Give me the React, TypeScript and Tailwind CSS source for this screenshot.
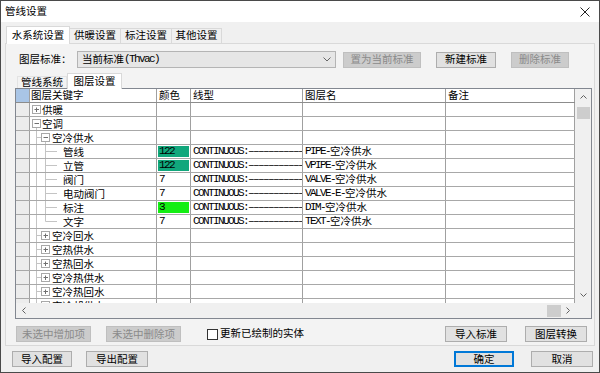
import React from 'react';

const CJK = "font-['Liberation_Sans','Noto_Sans_CJK_SC',sans-serif]";
const MONO = "font-['Liberation_Mono','Noto_Sans_CJK_SC',monospace] text-[11px] tracking-[-1.6px]";

type Row = {
  key: string;
  kind: 'root' | 'group' | 'leaf';
  open?: boolean;
  last?: boolean;
  color?: string;
  fill?: string;
  name?: string;
};

const ROWS: Row[] = [
  { key: '供暖', kind: 'root', open: false },
  { key: '空调', kind: 'root', open: true },
  { key: '空冷供水', kind: 'group', open: true },
  { key: '管线', kind: 'leaf', color: '122', fill: 'bg-[#11a77c]', name: 'PIPE' },
  { key: '立管', kind: 'leaf', color: '122', fill: 'bg-[#11a77c]', name: 'VPIPE' },
  { key: '阀门', kind: 'leaf', color: '7', name: 'VALVE' },
  { key: '电动阀门', kind: 'leaf', color: '7', name: 'VALVE-E' },
  { key: '标注', kind: 'leaf', color: '3', fill: 'bg-[#14ee14]', name: 'DIM' },
  { key: '文字', kind: 'leaf', color: '7', name: 'TEXT', last: true },
  { key: '空冷回水', kind: 'group' },
  { key: '空热供水', kind: 'group' },
  { key: '空热回水', kind: 'group' },
  { key: '空冷热供水', kind: 'group' },
  { key: '空冷热回水', kind: 'group' },
  { key: '空冷却供水', kind: 'group' },
];

const LINE = '#c4c4c4';

function Box({ x, open }: { x: number; open?: boolean }) {
  return (
    <g>
      <rect x={x + 0.5} y={2.5} width={8} height={8} fill="#fff" stroke="#a8a8a8" />
      <line x1={x + 2.5} y1={6.5} x2={x + 7} y2={6.5} stroke="#707070" />
      {!open && <line x1={x + 4.5} y1={4.5} x2={x + 4.5} y2={9} stroke="#707070" />}
    </g>
  );
}

function TreeGlyph({ row }: { row: Row }) {
  if (row.kind === 'root') {
    return (
      <svg width={12} height={13} className="shrink-0">
        {row.open && <line x1={6.5} y1={11} x2={6.5} y2={13} stroke={LINE} />}
        <Box x={2} open={row.open} />
      </svg>
    );
  }
  if (row.kind === 'group') {
    return (
      <svg width={22} height={13} className="shrink-0">
        <line x1={6.5} y1={0} x2={6.5} y2={13} stroke={LINE} />
        <line x1={6.5} y1={6.5} x2={11} y2={6.5} stroke={LINE} />
        {row.open && <line x1={15.5} y1={11} x2={15.5} y2={13} stroke={LINE} />}
        <Box x={11} open={row.open} />
      </svg>
    );
  }
  return (
    <svg width={33} height={13} className="shrink-0">
      <line x1={6.5} y1={0} x2={6.5} y2={13} stroke={LINE} />
      <line x1={15.5} y1={0} x2={15.5} y2={row.last ? 6.5 : 13} stroke={LINE} />
      <line x1={15.5} y1={6.5} x2={27} y2={6.5} stroke={LINE} />
    </svg>
  );
}

function Btn({ label, w, disabled, primary }: { label: string; w: string; disabled?: boolean; primary?: boolean }) {
  return (
    <div
      className={`${w} h-[16px] flex items-center justify-center text-[10.5px] leading-none ${
        disabled
          ? 'bg-[#cccccc] border border-[#bfbfbf] text-[#8a8a8a]'
          : primary
          ? 'bg-[#e1e1e1] border-2 border-[#0078d7] text-black'
          : 'bg-[#e1e1e1] border border-[#adadad] text-black'
      }`}
    >
      {label}
    </div>
  );
}

const CELL = 'h-full border-r border-[#a0a0a0] overflow-hidden whitespace-nowrap flex items-center';

export default function App() {
  return (
    <div className={`w-[600px] h-[373px] bg-[#f0f0f0] border border-[#4a4a4a] flex flex-col text-black ${CJK}`}>
      {/* 标题栏 */}
      <div className="h-[21px] bg-white flex items-center justify-between pl-[4px] pr-[9px] shrink-0">
        <span className="text-[10.5px]">管线设置</span>
        <svg width={10} height={10} viewBox="0 0 10 10">
          <path d="M0.5 0.5 L9.5 9.5 M9.5 0.5 L0.5 9.5" stroke="#222" strokeWidth={1} />
        </svg>
      </div>

      {/* 主选项卡 */}
      <div className="h-[21px] pl-[5px] pt-[4px] flex items-end shrink-0">
        <div className="w-[64px] h-[18px] bg-white border border-b-0 border-[#d9d9d9] flex items-center justify-center text-[10.5px] relative top-[1px]">
          水系统设置
        </div>
        <div className="w-[51px] h-[15px] bg-[#f0f0f0] border border-l-0 border-b-0 border-[#d9d9d9] flex items-center justify-center text-[10.5px]">
          供暖设置
        </div>
        <div className="w-[51px] h-[15px] bg-[#f0f0f0] border border-l-0 border-b-0 border-[#d9d9d9] flex items-center justify-center text-[10.5px]">
          标注设置
        </div>
        <div className="w-[50px] h-[15px] bg-[#f0f0f0] border border-l-0 border-b-0 border-[#d9d9d9] flex items-center justify-center text-[10.5px]">
          其他设置
        </div>
      </div>

      {/* 选项卡内容 */}
      <div className="mx-[4px] h-[303px] border border-[#d9d9d9] bg-[#f3f3f3] pl-[9px] pr-[3px] pt-[7px] flex flex-col shrink-0">
        {/* 图层标准 */}
        <div className="h-[17px] flex items-center">
          <span className="ml-[4px] w-[58px] text-[10.5px]">图层标准：</span>
          <div className="w-[259px] h-[17px] bg-[#e6e6e6] border border-[#b4b4b4] flex items-center justify-between pl-[4px] pr-[4px]">
            <span className="text-[10.5px] flex items-center">
              当前标准<span className={MONO}>(Thvac)</span>
            </span>
            <svg width={8} height={5} viewBox="0 0 8 5">
              <path d="M0.5 0.5 L4 4 L7.5 0.5" fill="none" stroke="#666" />
            </svg>
          </div>
          <div className="ml-[7px]">
            <Btn label="置为当前标准" w="w-[78px]" disabled />
          </div>
          <div className="ml-[15px]">
            <Btn label="新建标准" w="w-[60px]" />
          </div>
          <div className="ml-[15px]">
            <Btn label="删除标准" w="w-[58px]" disabled />
          </div>
        </div>

        {/* 子选项卡 */}
        <div className="mt-[5px] h-[15px] flex items-end pl-[2px]">
          <div className="w-[50px] h-[12px] flex items-center justify-center text-[10.5px] border border-b-0 border-[#e3e3e3]">
            管线系统
          </div>
          <div className="w-[55px] h-[16px] bg-white border border-b-0 border-[#d9d9d9] flex items-center justify-center text-[10.5px] relative top-[1px]">
            图层设置
          </div>
        </div>

        {/* 表格 */}
        <div className="w-[577px] h-[231px] border border-[#828790] bg-white flex flex-col text-[10.5px] leading-[13px]">
          <div className="flex h-[214px]">
            <div className="w-[559px] flex flex-col">
              {/* 表头 */}
              <div className="h-[14px] flex border-b border-[#8c8c8c] shrink-0">
                <div className="w-[14px] h-full bg-[#a9c5e6] border-r border-[#a0a0a0]" />
                <div className={`${CELL} w-[127px] pl-[1px]`}>图层关键字</div>
                <div className={`${CELL} w-[34px] pl-[2px]`}>颜色</div>
                <div className={`${CELL} w-[112px] pl-[2px]`}>线型</div>
                <div className={`${CELL} w-[143px] pl-[2px]`}>图层名</div>
                <div className={`${CELL} w-[129px] pl-[2px]`}>备注</div>
              </div>
              {/* 数据行 */}
              <div className="h-[200px] overflow-hidden">
                {ROWS.map((r, i) => (
                  <div key={i} className="h-[14px] flex border-b border-[#a8a8a8]">
                    <div className="w-[14px] h-full bg-[#ececec] border-r border-[#a0a0a0]" />
                    <div className={`${CELL} w-[127px]`}>
                      <TreeGlyph row={r} />
                      <span className="pt-[1px]">{r.key}</span>
                    </div>
                    <div className={`${CELL} w-[34px] px-[1px] py-[1px]`}>
                      {r.color && (
                        <div className={`w-full h-full flex items-center pl-[1px] ${r.fill ?? ''}`}>
                          <span className={MONO}>{r.color}</span>
                        </div>
                      )}
                    </div>
                    <div className={`${CELL} w-[112px] pl-[2px]`}>
                      {r.name && <span className={MONO}>CONTINUOUS:–––––––––––</span>}
                    </div>
                    <div className={`${CELL} w-[143px] pl-[2px]`}>
                      {r.name && (
                        <span className="flex items-center">
                          <span className={MONO}>{r.name}-</span>
                          <span>空冷供水</span>
                        </span>
                      )}
                    </div>
                    <div className={`${CELL} w-[129px]`} />
                  </div>
                ))}
              </div>
            </div>
            {/* 竖向滚动条 */}
            <div className="w-[16px] h-full bg-[#f0f0f0] flex flex-col items-center">
              <div className="h-[16px] flex items-center justify-center">
                <svg width={7} height={4} viewBox="0 0 7 4">
                  <path d="M0.5 3.5 L3.5 0.5 L6.5 3.5" fill="none" stroke="#606060" />
                </svg>
              </div>
              <div className="w-[13px] h-[12px] bg-[#cdcdcd] mt-[2px]" />
              <div className="flex-1" />
              <div className="h-[16px] flex items-center justify-center">
                <svg width={7} height={4} viewBox="0 0 7 4">
                  <path d="M0.5 0.5 L3.5 3.5 L6.5 0.5" fill="none" stroke="#606060" />
                </svg>
              </div>
            </div>
          </div>
          {/* 横向滚动条 */}
          <div className="flex h-[15px]">
            <div className="w-[559px] h-full bg-[#f0f0f0] flex items-center">
              <div className="w-[16px] flex items-center justify-center">
                <svg width={4} height={7} viewBox="0 0 4 7">
                  <path d="M3.5 0.5 L0.5 3.5 L3.5 6.5" fill="none" stroke="#606060" />
                </svg>
              </div>
              <div className="flex-1" />
              <div className="w-[14px] h-[12px] bg-[#cdcdcd]" />
              <div className="w-[14px] flex items-center justify-center">
                <svg width={4} height={7} viewBox="0 0 4 7">
                  <path d="M0.5 0.5 L3.5 3.5 L0.5 6.5" fill="none" stroke="#606060" />
                </svg>
              </div>
            </div>
            <div className="w-[16px] h-full bg-[#f0f0f0]" />
          </div>
        </div>

        {/* 面板底部按钮 */}
        <div className="mt-[7px] h-[16px] flex items-center pl-[1px] pr-[4px]">
          <Btn label="未选中增加项" w="w-[75px]" disabled />
          <div className="ml-[15px]">
            <Btn label="未选中删除项" w="w-[75px]" disabled />
          </div>
          <div className="ml-[26px] w-[11px] h-[11px] bg-white border border-[#333]" />
          <span className="ml-[2px] text-[10.5px]">更新已绘制的实体</span>
          <div className="flex-1" />
          <Btn label="导入标准" w="w-[62px]" />
          <div className="ml-[18px]">
            <Btn label="图层转换" w="w-[62px]" />
          </div>
        </div>
      </div>

      {/* 窗口底部按钮 */}
      <div className="mt-[5px] h-[16px] flex items-center pl-[11px] pr-[6px]">
        <Btn label="导入配置" w="w-[60px]" />
        <div className="ml-[14px]">
          <Btn label="导出配置" w="w-[62px]" />
        </div>
        <div className="flex-1" />
        <Btn label="确定" w="w-[60px]" primary />
        <div className="ml-[17px]">
          <Btn label="取消" w="w-[62px]" />
        </div>
      </div>
    </div>
  );
}
